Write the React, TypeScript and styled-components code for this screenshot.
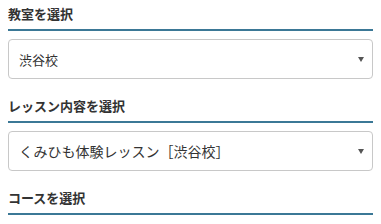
import styled, { createGlobalStyle } from "styled-components";

const GlobalStyle = createGlobalStyle`
  body {
    margin: 0;
    background: #fff;
    font-family: "Noto Sans CJK JP", "Noto Sans", sans-serif;
    color: #333;
  }
`;

const Wrapper = styled.div`
  padding: 4px 8px 0 8px;
  width: 365px;
`;

const Section = styled.section`
  margin-bottom: 17px;
`;

const Heading = styled.h3`
  margin: 0 0 8px 0;
  font-size: 13px;
  font-weight: 700;
  line-height: 20px;
  padding-bottom: 5px;
  border-bottom: 2px solid #3b7896;
  color: #333;
`;

const SelectBox = styled.div<{ $large?: boolean }>`
  position: relative;
  display: flex;
  align-items: center;
  height: 40px;
  box-sizing: border-box;
  padding: 0 30px 0 10px;
  border: 1px solid #c8c8c8;
  border-radius: 4px;
  background: #fff;
  font-size: ${(p) => (p.$large ? "14px" : "13px")};
  color: #333;
`;

const Caret = styled.span`
  position: absolute;
  right: 8px;
  top: 50%;
  margin-top: -2px;
  width: 0;
  height: 0;
  border-left: 3.5px solid transparent;
  border-right: 3.5px solid transparent;
  border-top: 5px solid #555;
`;

export default function App() {
  return (
    <Wrapper>
      <GlobalStyle />
      <Section>
        <Heading>教室を選択</Heading>
        <SelectBox>
          渋谷校
          <Caret />
        </SelectBox>
      </Section>
      <Section>
        <Heading>レッスン内容を選択</Heading>
        <SelectBox $large>
          くみひも体験レッスン［渋谷校］
          <Caret />
        </SelectBox>
      </Section>
      <Section>
        <Heading>コースを選択</Heading>
      </Section>
    </Wrapper>
  );
}
